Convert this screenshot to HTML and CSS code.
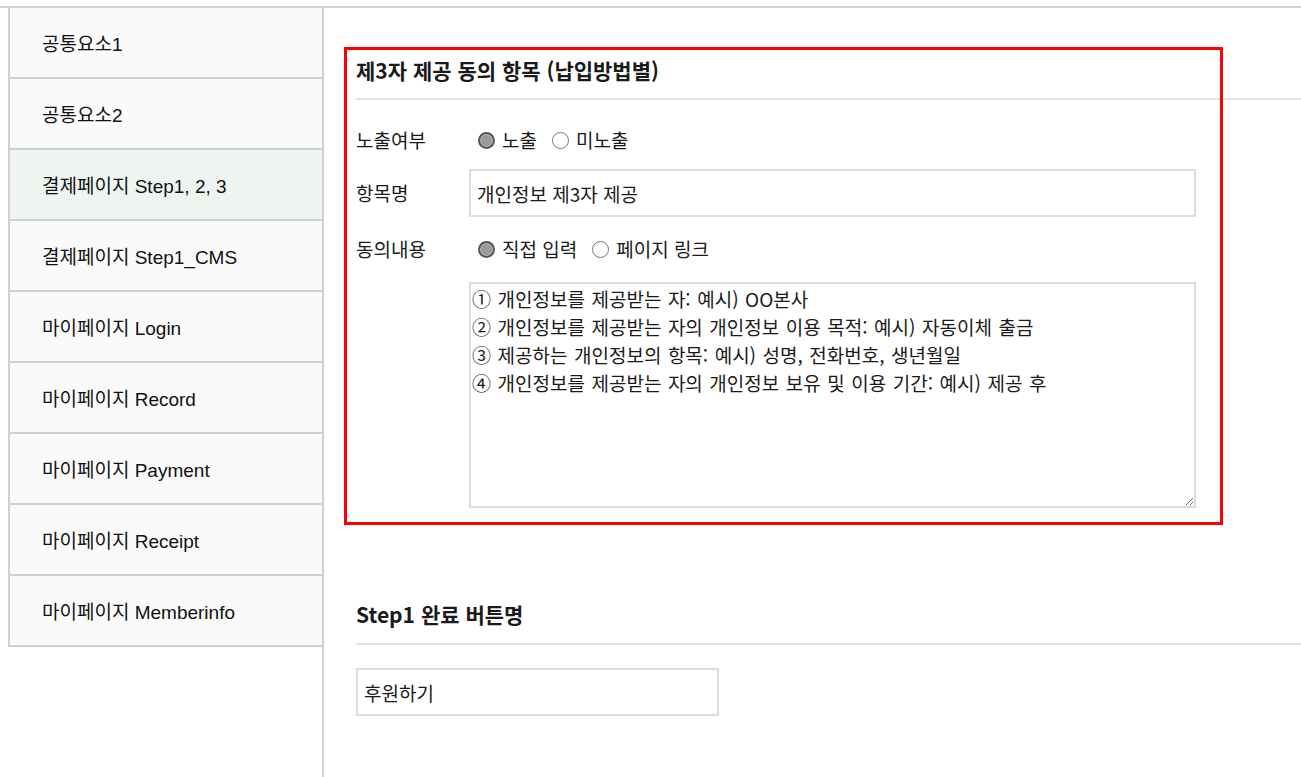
FILE: index.html
```html
<!DOCTYPE html>
<html lang="ko">
<head>
<meta charset="utf-8">
<title>설정</title>
<link rel="stylesheet" href="styles.css">
</head>
<body>
<div class="page">
  <aside class="side">
    <ul class="menu">
      <li class="menu-item">공통요소1</li>
      <li class="menu-item">공통요소2</li>
      <li class="menu-item is-active">결제페이지 Step1, 2, 3</li>
      <li class="menu-item">결제페이지 Step1_CMS</li>
      <li class="menu-item">마이페이지 Login</li>
      <li class="menu-item">마이페이지 Record</li>
      <li class="menu-item">마이페이지 Payment</li>
      <li class="menu-item">마이페이지 Receipt</li>
      <li class="menu-item">마이페이지 Memberinfo</li>
    </ul>
  </aside>
  <main class="main">
    <section class="sec">
      <h2 class="sec-title">제3자 제공 동의 항목 (납입방법별)</h2>
      <div class="row row-radio">
        <span class="label">노출여부</span>
        <div class="ctrl">
          <label class="opt"><input type="radio" name="show" checked><span>노출</span></label>
          <label class="opt"><input type="radio" name="show"><span>미노출</span></label>
        </div>
      </div>
      <div class="row row-input">
        <span class="label">항목명</span>
        <div class="ctrl"><input class="text-input wide" type="text" value="개인정보 제3자 제공"></div>
      </div>
      <div class="row row-radio row-agree">
        <span class="label">동의내용</span>
        <div class="ctrl">
          <label class="opt"><input type="radio" name="mode" checked><span>직접 입력</span></label>
          <label class="opt"><input type="radio" name="mode"><span>페이지 링크</span></label>
        </div>
      </div>
      <div class="row row-area">
        <span class="label"></span>
        <div class="ctrl"><textarea class="area" spellcheck="false">① 개인정보를 제공받는 자: 예시) OO본사
② 개인정보를 제공받는 자의 개인정보 이용 목적: 예시) 자동이체 출금
③ 제공하는 개인정보의 항목: 예시) 성명, 전화번호, 생년월일
④ 개인정보를 제공받는 자의 개인정보 보유 및 이용 기간: 예시) 제공 후</textarea></div>
      </div>
    </section>
    <section class="sec sec-step">
      <h2 class="sec-title">Step1 완료 버튼명</h2>
      <input class="text-input short" type="text" value="후원하기">
    </section>
    <div class="highlight"></div>
  </main>
</div>
</body>
</html>
```
FILE: styles.css
```css
* { box-sizing: border-box; }
html, body { margin: 0; padding: 0; background: #fff; }
body {
  font-family: "Noto Sans CJK KR", "Noto Sans", sans-serif;
  color: #1a1a1a;
  overflow: hidden;
}
.page {
  display: flex;
  margin-top: 6px;
  padding-left: 8px;
  border-top: 2px solid #d0d0d0;
  height: 771px;
}
.side {
  width: 316px;
  flex: none;
  border-right: 2px solid #d0d0d0;
}
.menu { list-style: none; margin: 0; padding: 0; }
.menu-item {
  height: 71px;
  display: flex;
  align-items: center;
  padding-left: 32px;
  border-left: 2px solid #d0d0d0;
  border-bottom: 2px solid #d0d0d0;
  background: #fafafa;
  font-family: "Liberation Sans", "Noto Sans CJK KR", sans-serif;
  font-size: 19px;
  color: #111;
}
.menu-item.is-active { background: #eef5f1; }
.main {
  flex: 1;
  position: relative;
  padding-left: 32px;
  min-width: 0;
}
.sec-title {
  margin: 49px 0 0;
  font-size: 21px;
  line-height: 26px;
  font-weight: 700;
  color: #1a1a1a;
  padding-bottom: 15px;
  border-bottom: 2px solid #e2e2e2;
}
.row { display: flex; align-items: center; }
.label {
  width: 113px;
  flex: none;
  font-size: 19px;
  line-height: 26px;
}
.ctrl { display: flex; align-items: center; }
.row-radio { margin-top: 27px; }
.row-input { margin-top: 16px; }
.row-agree { margin-top: 19px; }
.row-area { margin-top: 19px; align-items: flex-start; }
.opt {
  display: inline-flex;
  align-items: center;
  font-size: 19px;
  line-height: 26px;
  margin-right: 15px;
}
.opt input {
  appearance: none;
  -webkit-appearance: none;
  width: 17px;
  height: 17px;
  margin: 0 7px 0 9px;
  border-radius: 50%;
  border: 1px solid #767676;
  background: #fff;
}
.opt + .opt input { margin-left: 0; }
.opt input:checked {
  border: 2px solid #555;
  background: #9a9a9a;
  box-shadow: inset 0 0 0 1px #bdbdbd;
}
.text-input {
  height: 48px;
  border: 2px solid #dcdcdc;
  padding: 0 6px;
  font-family: "Noto Sans CJK KR", sans-serif;
  font-size: 19px;
  color: #1a1a1a;
  background: #fff;
  outline: none;
}
.wide { width: 727px; }
.short { width: 363px; margin-top: 23px; display: block; }
.area {
  width: 727px;
  height: 226px;
  margin-top: 1px;
  border: 2px solid #dcdcdc;
  padding: 1px 1px;
  font-family: "Noto Sans CJK KR", sans-serif;
  font-size: 19px;
  line-height: 28px;
  word-spacing: 1.2px;
  color: #1a1a1a;
  resize: both;
  outline: none;
}
.sec-step .sec-title { margin-top: 93px; padding-bottom: 16px; }
.highlight {
  position: absolute;
  left: 20px;
  top: 39px;
  width: 879px;
  height: 478px;
  border: 3px solid #ff0000;
  pointer-events: none;
}
```
